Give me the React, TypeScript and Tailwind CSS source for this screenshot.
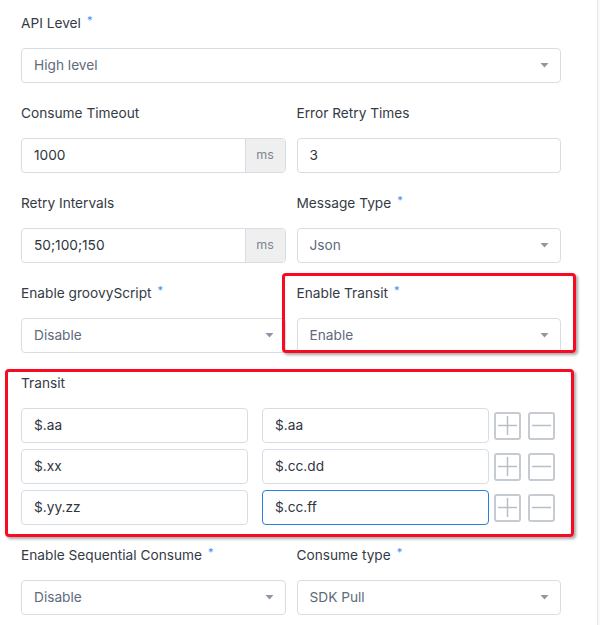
import React from 'react';

const Label: React.FC<{ text: string; required?: boolean }> = ({ text, required }) => (
    <div className="h-5 flex items-center text-[13.7px] text-[#353b45] mb-[15px] leading-5">
        {text}
        {required && <span className="ml-[6px] text-[11px] text-[#3d8df2] self-start leading-[14px]">*</span>}
    </div>
);

const SelectBox: React.FC<{ value: string }> = ({ value }) => (
    <div className="h-[35px] border border-[#d7dde5] rounded-[4px] bg-white flex items-center pl-[12px] pr-[11px] text-[13.7px] text-[#606b7b]">
        <span className="flex-1">{value}</span>
        <svg width="9" height="5" viewBox="0 0 9 5">
            <path d="M0.5 0h8L4.5 4.5z" fill="#8f97a4" />
        </svg>
    </div>
);

const AddonInput: React.FC<{ value: string }> = ({ value }) => (
    <div className="h-[35px] border border-[#d7dde5] rounded-[4px] bg-white flex overflow-hidden text-[13.7px]">
        <span className="flex-1 flex items-center pl-[12px] text-[#2f3540]">{value}</span>
        <span className="w-[40px] bg-[#efefef] border-l border-[#d7dde5] flex items-center justify-center text-[12.5px] text-[#7d8590]">ms</span>
    </div>
);

const TextInput: React.FC<{ value: string; focused?: boolean }> = ({ value, focused }) => (
    <div
        className={
            focused
                ? 'h-[35px] flex-1 border border-[#2b7be4] rounded-[4px] bg-white flex items-center pl-[12px] text-[13.7px] text-[#2f3540]'
                : 'h-[35px] flex-1 border border-[#d7dde5] rounded-[4px] bg-white flex items-center pl-[12px] text-[13.7px] text-[#2f3540]'
        }
    >
        {value}
    </div>
);

const IconButton: React.FC<{ kind: 'plus' | 'minus' }> = ({ kind }) => (
    <div className="w-[27px] h-[28px] border-2 border-[#c6cad1] rounded-[3px] flex items-center justify-center">
        <svg width="19" height="19" viewBox="0 0 19 19">
            <path d="M0 9.5h19" stroke="#b9bec6" strokeWidth="1.5" />
            {kind === 'plus' && <path d="M9.5 0v19" stroke="#b9bec6" strokeWidth="1.5" />}
        </svg>
    </div>
);

const transitRows = [
    { from: '$.aa', to: '$.aa' },
    { from: '$.xx', to: '$.cc.dd' },
    { from: '$.yy.zz', to: '$.cc.ff', focused: true },
];

export default function App() {
    return (
        <div className="w-[600px] h-[625px] bg-white flex overflow-hidden" style={{ fontFamily: 'Inter, "Noto Sans", sans-serif' }}>
            <div className="relative w-[597px] pl-[21px] pr-[36px] pt-[13px] flex flex-col gap-[20px]">
                <div>
                    <Label text="API Level" required />
                    <SelectBox value="High level" />
                </div>

                <div className="grid grid-cols-2 gap-x-[11px]">
                    <div>
                        <Label text="Consume Timeout" />
                        <AddonInput value="1000" />
                    </div>
                    <div>
                        <Label text="Error Retry Times" />
                        <div className="flex"><TextInput value="3" /></div>
                    </div>
                </div>

                <div className="grid grid-cols-2 gap-x-[11px]">
                    <div>
                        <Label text="Retry Intervals" />
                        <AddonInput value="50;100;150" />
                    </div>
                    <div>
                        <Label text="Message Type" required />
                        <SelectBox value="Json" />
                    </div>
                </div>

                <div className="grid grid-cols-2 gap-x-[11px]">
                    <div>
                        <Label text="Enable groovyScript" required />
                        <SelectBox value="Disable" />
                    </div>
                    <div>
                        <Label text="Enable Transit" required />
                        <SelectBox value="Enable" />
                    </div>
                </div>

                <div>
                    <Label text="Transit" />
                    <div className="flex flex-col gap-[6px] pr-[6px]">
                        {transitRows.map((row, i) => (
                            <div key={i} className="flex items-center">
                                <div className="flex-1 flex gap-[14px]">
                                    <TextInput value={row.from} />
                                    <TextInput value={row.to} focused={row.focused} />
                                </div>
                                <div className="flex gap-[7px] ml-[5px]">
                                    <IconButton kind="plus" />
                                    <IconButton kind="minus" />
                                </div>
                            </div>
                        ))}
                    </div>
                </div>

                <div className="grid grid-cols-2 gap-x-[11px]">
                    <div>
                        <Label text="Enable Sequential Consume" required />
                        <SelectBox value="Disable" />
                    </div>
                    <div>
                        <Label text="Consume type" required />
                        <SelectBox value="SDK Pull" />
                    </div>
                </div>

                {/* annotation boxes */}
                <div className="absolute left-[282px] top-[273px] w-[294px] h-[80px] border-[3px] border-[#f70a22] rounded-[4px] shadow-[2px_2px_3px_rgba(0,0,0,0.35)]" />
                <div className="absolute left-[5px] top-[369px] w-[569px] h-[168px] border-[3px] border-[#f70a22] rounded-[4px] shadow-[2px_2px_3px_rgba(0,0,0,0.35)]" />
            </div>
            <div className="w-[3px] h-full border-l border-[#e4e6e9] bg-[#fafafa]" />
        </div>
    );
}
